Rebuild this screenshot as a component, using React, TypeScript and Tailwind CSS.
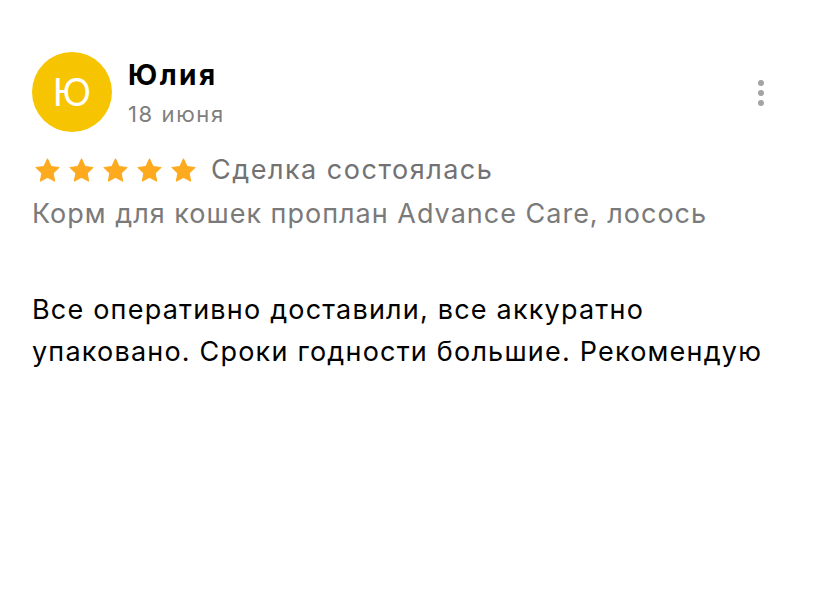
function Star() {
  return (
    <svg viewBox="0 0 24 24" className="w-[27px] h-[27px]">
      <path
        d="M12 1.8l3.1 6.6 7.1.9-5.2 5 1.3 7.1L12 18l-6.3 3.4L7 14.3l-5.2-5 7.1-.9z"
        fill="#fdaa1f"
        stroke="#fdaa1f"
        strokeWidth="1"
        strokeLinejoin="round"
      />
    </svg>
  );
}

export default function App() {
  return (
    <div className="w-[828px] h-[611px] bg-white font-['Inter',sans-serif] text-black">
      <div className="pt-[52px] pl-[32px] pr-[64px]">
        <div className="flex items-start">
          <div className="w-[80px] h-[80px] rounded-full bg-[#f6c400] flex items-center justify-center text-white text-[38px] leading-none">
            Ю
          </div>
          <div className="ml-[16px] mt-[6px] flex-1">
            <div className="text-[28px] font-bold leading-[34px] tracking-[2.5px]">Юлия</div>
            <div className="text-[22px] leading-[26px] text-[#7f7f7f] mt-[9px] tracking-[1.6px]">18 июня</div>
          </div>
          <div className="mt-[28px] flex flex-col gap-[4px]">
            <span className="w-[6px] h-[6px] rounded-full bg-[#a3a3a3]" />
            <span className="w-[6px] h-[6px] rounded-full bg-[#a3a3a3]" />
            <span className="w-[6px] h-[6px] rounded-full bg-[#a3a3a3]" />
          </div>
        </div>

        <div className="flex items-center mt-[20px]">
          <div className="flex gap-[7px] pl-[2px]">
            <Star />
            <Star />
            <Star />
            <Star />
            <Star />
          </div>
          <span className="ml-[14px] text-[27px] leading-[36px] text-[#727272] tracking-[1.5px]">Сделка состоялась</span>
        </div>
        <div className="text-[27px] leading-[36px] text-[#7a7a7a] mt-[8px] tracking-[1px]">
          Корм для кошек проплан Advance Care, лосось
        </div>

        <div className="text-[27px] leading-[42px] mt-[57px] tracking-[1.2px]">
          Все оперативно доставили, все аккуратно
          <br />
          упаковано. Сроки годности большие. Рекомендую
        </div>
      </div>
    </div>
  );
}
